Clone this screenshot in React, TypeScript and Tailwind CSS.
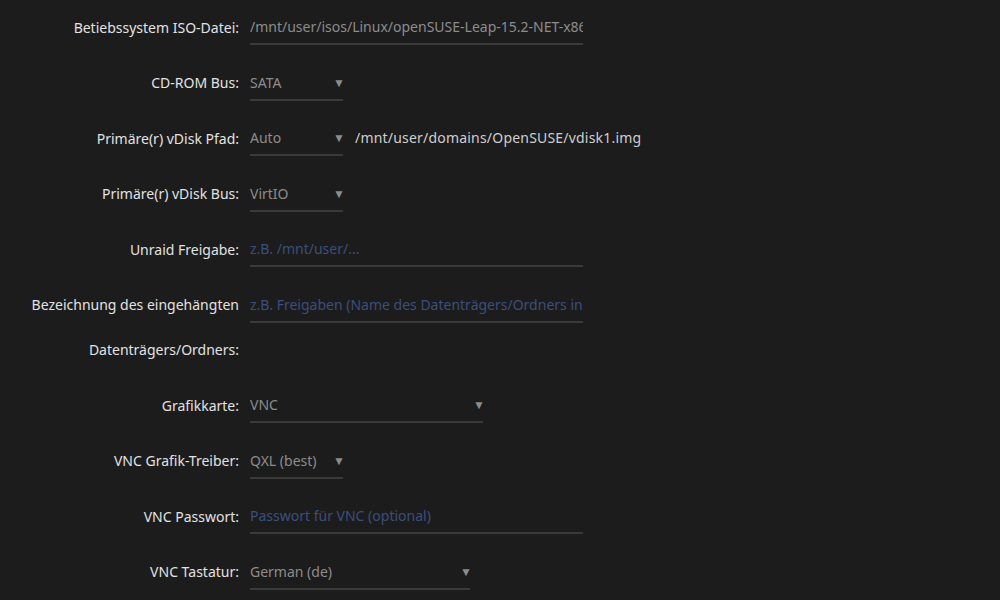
const font = { fontFamily: '"Noto Sans", "Open Sans", sans-serif' }

type Field =
  | { kind: 'text'; value: string; width: string }
  | { kind: 'placeholder'; value: string; width: string }
  | { kind: 'select'; value: string; width: string; after?: string }

const rows: { label: string; field: Field }[] = [
  {
    label: 'Betiebssystem ISO-Datei:',
    field: { kind: 'text', value: '/mnt/user/isos/Linux/openSUSE-Leap-15.2-NET-x86_64.iso', width: 'w-[333px]' },
  },
  { label: 'CD-ROM Bus:', field: { kind: 'select', value: 'SATA', width: 'w-[93px]' } },
  {
    label: 'Primäre(r) vDisk Pfad:',
    field: { kind: 'select', value: 'Auto', width: 'w-[93px]', after: '/mnt/user/domains/OpenSUSE/vdisk1.img' },
  },
  { label: 'Primäre(r) vDisk Bus:', field: { kind: 'select', value: 'VirtIO', width: 'w-[93px]' } },
  { label: 'Unraid Freigabe:', field: { kind: 'placeholder', value: 'z.B. /mnt/user/...', width: 'w-[333px]' } },
  {
    label: 'Bezeichnung des eingehängten Datenträgers/Ordners:',
    field: {
      kind: 'placeholder',
      value: 'z.B. Freigaben (Name des Datenträgers/Ordners innerhalb der VM)',
      width: 'w-[333px]',
    },
  },
  { label: 'Grafikkarte:', field: { kind: 'select', value: 'VNC', width: 'w-[233px]' } },
  { label: 'VNC Grafik-Treiber:', field: { kind: 'select', value: 'QXL (best)', width: 'w-[93px]' } },
  { label: 'VNC Passwort:', field: { kind: 'placeholder', value: 'Passwort für VNC (optional)', width: 'w-[333px]' } },
  { label: 'VNC Tastatur:', field: { kind: 'select', value: 'German (de)', width: 'w-[220px]' } },
]

function FieldBox({ field }: { field: Field }) {
  if (field.kind === 'select') {
    return (
      <div className="mt-[17px] flex items-start">
        <div
          className={`${field.width} flex items-center justify-between border-b-2 border-[#3a3a3a] pb-[6px] leading-5 text-[#8c8c8c]`}
        >
          <span className="whitespace-nowrap">{field.value}</span>
          <span className="-mr-[2px] text-[12px] leading-5 text-[#8c8c8c]">▼</span>
        </div>
        {field.after && <span className="ml-[12px] leading-5 tracking-[0.2px] text-[#cfcfcf]">{field.after}</span>}
      </div>
    )
  }
  const isText = field.kind === 'text'
  return (
    <input
      readOnly
      value={isText ? field.value : ''}
      placeholder={isText ? undefined : field.value}
      className={`${field.width} mt-[17px] block border-b-2 border-[#3a3a3a] bg-transparent pb-[6px] leading-5 text-[#8c8c8c] outline-none placeholder:text-[#3b4f7c]`}
    />
  )
}

export default function App() {
  return (
    <div className="h-[600px] w-[1000px] overflow-hidden bg-[#1c1c1c] text-[14px]" style={font}>
      <div className="flex flex-col">
        {rows.map((r) => (
          <div key={r.label} className="flex items-start pb-[6px]">
            <div className="mt-[4.5px] w-[239px] text-right leading-[45px] text-[#e2e2e2]">{r.label}</div>
            <div className="ml-[11px]">
              <FieldBox field={r.field} />
            </div>
          </div>
        ))}
      </div>
    </div>
  )
}
